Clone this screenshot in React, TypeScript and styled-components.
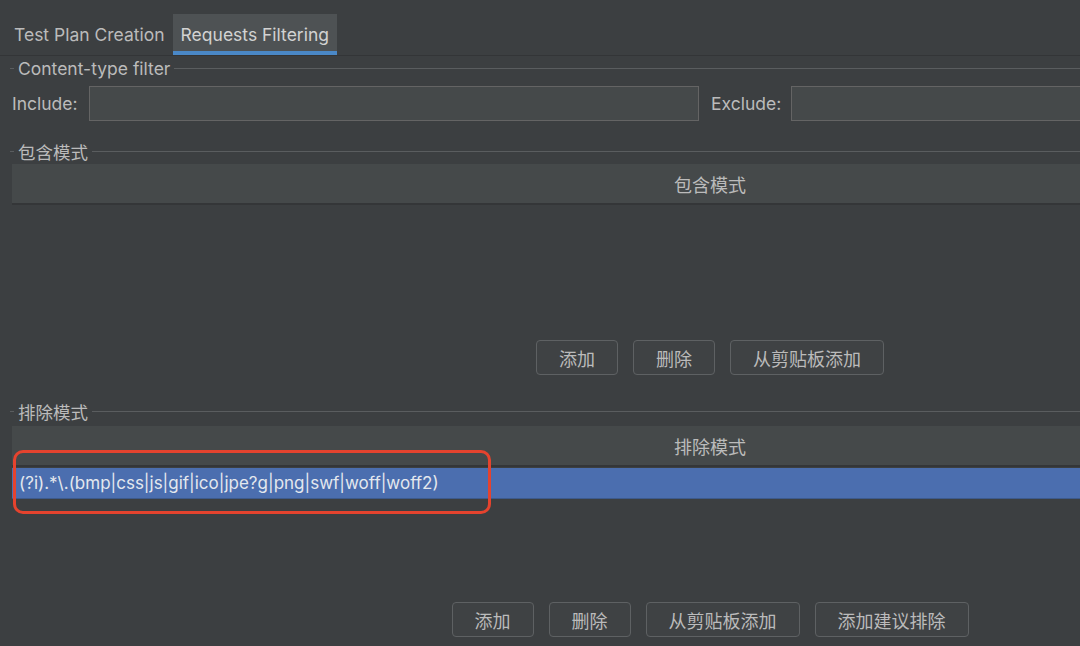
import styled, { createGlobalStyle } from 'styled-components';

const GlobalStyle = createGlobalStyle`
  html, body {
    margin: 0;
    padding: 0;
    background: #3c3f41;
    overflow: hidden;
  }
  body {
    font-family: Inter, "Noto Sans CJK SC", sans-serif;
    color: #bbbbbb;
  }
`;

const Page = styled.div`
  width: 1420px;
  height: 646px;
  background: #3c3f41;
  display: flex;
  flex-direction: column;
`;

const TabBar = styled.div`
  height: 55px;
  display: flex;
  align-items: flex-end;
  padding-left: 6px;
  border-bottom: 1px solid #333537;
`;

const Tab = styled.div<{ $active?: boolean }>`
  height: 41px;
  box-sizing: border-box;
  padding: 4px 8px 0;
  display: flex;
  align-items: center;
  font-size: 17.5px;
  color: ${({ $active }) => ($active ? '#d2d2d2' : '#bbbbbb')};
  background: ${({ $active }) => ($active ? '#4e5254' : 'transparent')};
  border-bottom: 4px solid ${({ $active }) => ($active ? '#4a88c7' : 'transparent')};
`;

const Content = styled.div`
  display: flex;
  flex-direction: column;
  padding: 0 12px;
`;

const TitleRow = styled.div<{ $top?: number }>`
  height: 24px;
  margin-top: ${({ $top }) => $top ?? 0}px;
  margin-left: -2px;
  display: flex;
  align-items: center;
  gap: 4px;
  font-size: 17.5px;
  color: #bbbbbb;

  &::before {
    content: '';
    width: 4px;
    height: 1px;
    background: #5a5d5f;
  }

  &::after {
    content: '';
    flex: 1;
    height: 1px;
    background: #5a5d5f;
  }
`;

const FilterRow = styled.div`
  margin-top: 6px;
  display: flex;
  align-items: center;
`;

const Label = styled.label`
  font-size: 17.5px;
  color: #bbbbbb;
  width: 77px;
  flex-shrink: 0;
`;

const ExcludeLabel = styled(Label)`
  width: 80px;
  margin-left: 12px;
`;

const TextInput = styled.input`
  width: 610px;
  height: 35px;
  box-sizing: border-box;
  background: #45494a;
  border: 1px solid #646464;
  color: #bbbbbb;
  font-size: 16px;
  outline: none;
  padding: 0 6px;
`;

const Table = styled.div<{ $height: number; $top?: number }>`
  position: relative;
  margin-top: ${({ $top }) => $top ?? 0}px;
  height: ${({ $height }) => $height}px;
  display: flex;
  flex-direction: column;
`;

const HeaderCell = styled.div`
  height: 39px;
  background: #45494a;
  border-bottom: 2px solid #343638;
  display: flex;
  align-items: center;
  justify-content: center;
  font-size: 18px;
  color: #bbbbbb;
`;

const Row = styled.div<{ $selected?: boolean }>`
  height: 30px;
  margin-top: 1px;
  display: flex;
  align-items: center;
  padding-left: 7px;
  font-size: 17px;
  color: ${({ $selected }) => ($selected ? '#e4e8ee' : '#bbbbbb')};
  background: ${({ $selected }) => ($selected ? '#4b6eaf' : 'transparent')};
  border-bottom: 1px solid ${({ $selected }) => ($selected ? '#3d5a8c' : 'transparent')};
`;

const Highlight = styled.div`
  position: absolute;
  left: 1px;
  top: 24px;
  width: 478px;
  height: 64px;
  box-sizing: border-box;
  border: 3px solid #e5432e;
  border-radius: 10px;
  pointer-events: none;
`;

const ButtonBar = styled.div`
  display: flex;
  justify-content: center;
  gap: 15px;
`;

const Button = styled.button`
  height: 35px;
  padding: 0 22px;
  min-width: 80px;
  box-sizing: border-box;
  background: #3f4244;
  border: 1px solid #5e6163;
  border-radius: 4px;
  color: #bbbbbb;
  font-family: inherit;
  font-size: 18px;
  cursor: pointer;
`;

export default function App() {
  return (
    <>
      <GlobalStyle />
      <Page>
        <TabBar>
          <Tab>Test Plan Creation</Tab>
          <Tab $active>Requests Filtering</Tab>
        </TabBar>

        <Content>
          <TitleRow>Content-type filter</TitleRow>
          <FilterRow>
            <Label>Include:</Label>
            <TextInput />
            <ExcludeLabel>Exclude:</ExcludeLabel>
            <TextInput />
          </FilterRow>

          <TitleRow $top={18}>包含模式</TitleRow>
          <Table $height={176} $top={1}>
            <HeaderCell>包含模式</HeaderCell>
          </Table>
          <ButtonBar>
            <Button>添加</Button>
            <Button>删除</Button>
            <Button>从剪贴板添加</Button>
          </ButtonBar>

          <TitleRow $top={24}>排除模式</TitleRow>
          <Table $height={176} $top={3}>
            <HeaderCell>排除模式</HeaderCell>
            <Row $selected>(?i).*\.(bmp|css|js|gif|ico|jpe?g|png|swf|woff|woff2)</Row>
            <Highlight />
          </Table>
          <ButtonBar>
            <Button>添加</Button>
            <Button>删除</Button>
            <Button>从剪贴板添加</Button>
            <Button>添加建议排除</Button>
          </ButtonBar>
        </Content>
      </Page>
    </>
  );
}
